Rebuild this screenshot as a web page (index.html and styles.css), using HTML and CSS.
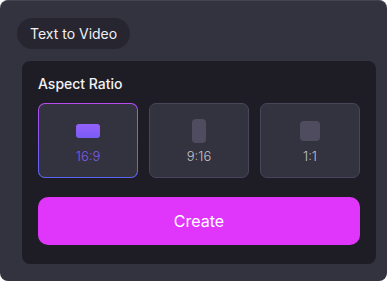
FILE: index.html
```html
<!doctype html>
<html lang="en">
	<head>
		<title>Text to Video</title>
		<link rel="stylesheet" href="styles.css">
	</head>
	<body>
		<div class="card">
			<div class="tab">Text to Video</div>

			<div class="panel">
				<div class="label">Aspect Ratio</div>
				<ul class="ratios">
					<li class="ratio selected">
						<span class="shape wide"></span>
						<span class="name">16:9</span>
					</li>
					<li class="ratio">
						<span class="shape tall"></span>
						<span class="name">9:16</span>
					</li>
					<li class="ratio">
						<span class="shape square"></span>
						<span class="name">1:1</span>
					</li>
				</ul>
				<button class="create">Create</button>
			</div>
		</div>
	</body>
</html>
```

FILE: styles.css
```css
body {
	margin: 0;
	background: #ffffff;
	font-family: Inter, "Noto Sans", sans-serif;
}

.card {
	box-sizing: border-box;
	width: 387px;
	height: 281px;
	padding: 17px 11px 0 22px;
	background: #33323f;
	border-top: 1px solid #43424f;
	border-radius: 8px;
}

.tab {
	display: inline-block;
	box-sizing: border-box;
	height: 31px;
	margin-left: -5px;
	padding: 0 13px;
	border-radius: 16px;
	background: #262530;
	color: #f0f0f4;
	font-size: 14px;
	line-height: 31px;
}

.panel {
	box-sizing: border-box;
	width: 354px;
	height: 203px;
	margin-top: 12px;
	padding: 13px 16px 0;
	background: #1e1d25;
	border-radius: 8px;
}

.label {
	color: #f2f2f5;
	font-size: 14px;
	font-weight: 500;
	line-height: 20px;
	margin-bottom: 9px;
}

.ratios {
	display: grid;
	grid-template-columns: repeat(3, 1fr);
	gap: 11px;
	margin: 0;
	padding: 0;
	list-style: none;
}

.ratio {
	box-sizing: border-box;
	height: 75px;
	display: flex;
	flex-direction: column;
	align-items: center;
	justify-content: center;
	gap: 5px;
	padding-top: 1px;
	background: #33323f;
	border: 1px solid #47465a;
	border-radius: 7px;
}

.ratio.selected {
	border-color: transparent;
	background:
		linear-gradient(#33323f, #33323f) padding-box,
		linear-gradient(#b84cf2, #5a66f0) border-box;
}

.shape {
	display: block;
	background: #4f4c5f;
	border-radius: 3px;
}

.shape.wide {
	width: 24px;
	height: 14px;
	margin: 5px 0;
}

.shape.tall {
	width: 14px;
	height: 24px;
	border-radius: 4px;
}

.shape.square {
	width: 20px;
	height: 20px;
	margin: 2px 0;
	border-radius: 4px;
}

.selected .shape {
	background: linear-gradient(#9460fb, #7b5df4);
}

.name {
	color: #c3c2cb;
	font-size: 13px;
	font-weight: 300;
	line-height: 16px;
}

.selected .name {
	color: #7e5ce8;
}

.create {
	display: block;
	width: 100%;
	height: 48px;
	margin-top: 19px;
	border: 0;
	border-radius: 10px;
	background: #e036fc;
	color: #ffffff;
	font-family: inherit;
	font-size: 16px;
	font-weight: 400;
}
```
